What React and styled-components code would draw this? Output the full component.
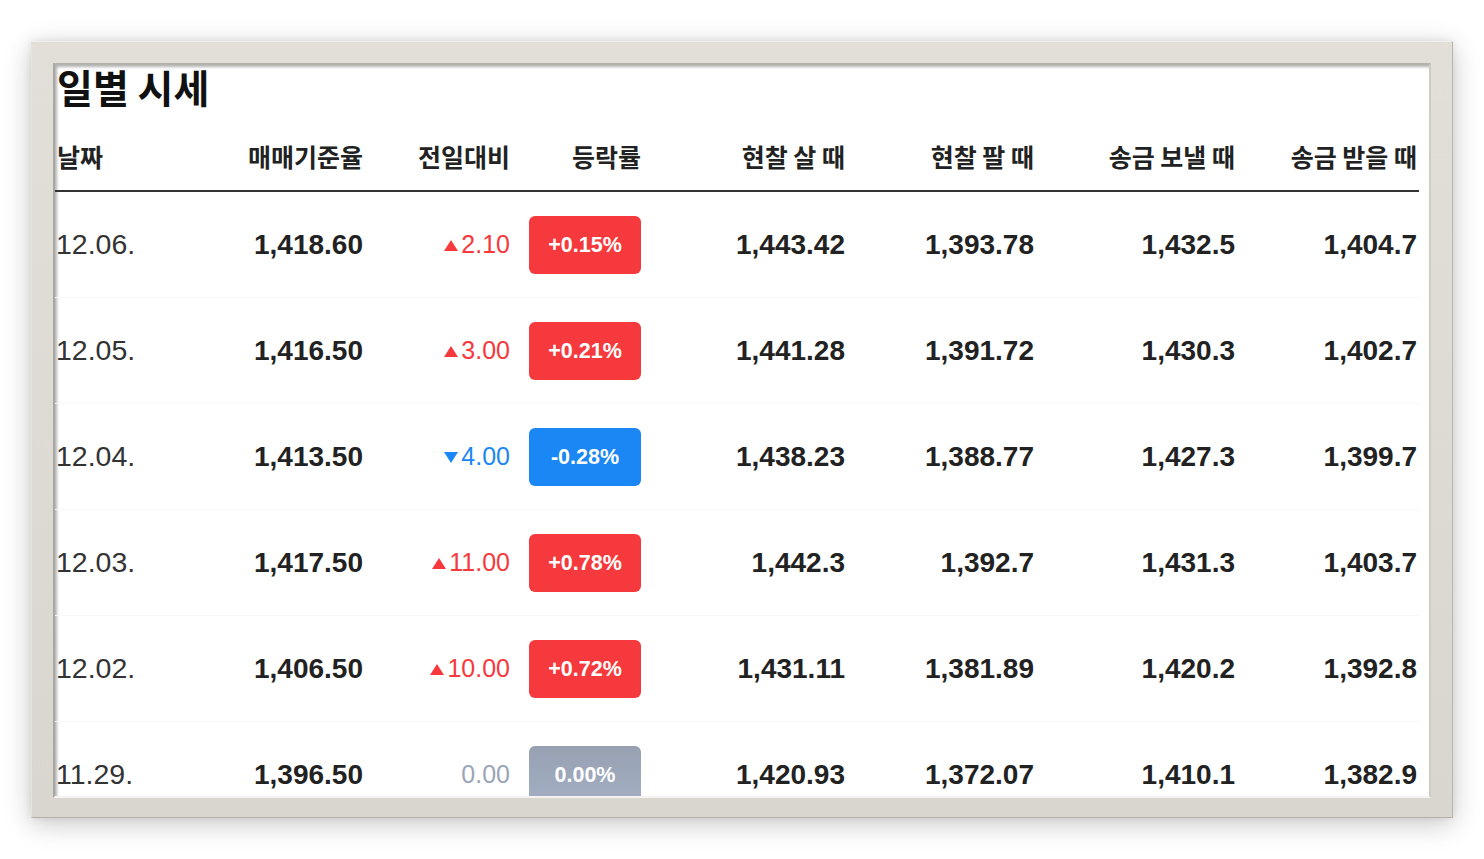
import React from 'react';
import styled, { createGlobalStyle } from 'styled-components';

const GlobalStyle = createGlobalStyle`
  html, body {
    margin: 0;
    padding: 0;
    background: #ffffff;
  }
`;

const Page = styled.div`
  padding: 41px 31px 0 31px;
  width: 1484px;
  height: 859px;
  box-sizing: border-box;
`;

const Frame = styled.div`
  width: 1422px;
  height: 777px;
  box-sizing: border-box;
  padding: 21px 21px 19px 21px;
  background: linear-gradient(180deg, #e2dfd9 0%, #d9d6cf 100%);
  border: 1px solid;
  border-color: #f2f0ec #b9b6af #b3b0a9 #e6e3dd;
  box-shadow: 0 6px 26px rgba(0, 0, 0, 0.22), 0 0 8px rgba(0, 0, 0, 0.08);
`;

const Panel = styled.div`
  height: 100%;
  box-sizing: border-box;
  display: flex;
  flex-direction: column;
  background: #ffffff;
  border: 2px solid;
  border-color: #b4b2ac #cfccc6 #f4f3f0 #a9a7a1;
  box-shadow: inset 2px 2px 3px rgba(0, 0, 0, 0.3);
`;

const Title = styled.h2`
  margin: 0;
  height: 49px;
  flex-shrink: 0;
  box-sizing: border-box;
  padding: 1px 0 0 2px;
  line-height: 40px;
  font-family: 'Noto Sans CJK KR', sans-serif;
  font-size: 39px;
  font-weight: 700;
  color: #111;
  white-space: nowrap;
`;

const Table = styled.div`
  flex: 1;
  min-height: 0;
  overflow: hidden;
`;

const cols = '175px 133px 147px 131px 204px 189px 201px 182px';

const HeadRow = styled.div`
  display: grid;
  grid-template-columns: ${cols};
  width: 1364px;
  height: 78px;
  box-sizing: border-box;
  padding-bottom: 20px;
  align-items: end;
  border-bottom: 2px solid #333;
`;

const HeadCell = styled.div`
  font-family: 'Noto Sans CJK KR', sans-serif;
  font-size: 25px;
  font-weight: 700;
  line-height: 28px;
  color: #222;
  text-align: ${(p) => (p.$left ? 'left' : 'right')};
  padding-left: ${(p) => (p.$left ? '2px' : '0')};
  white-space: nowrap;
`;

const Row = styled.div`
  display: grid;
  grid-template-columns: ${cols};
  width: 1364px;
  height: 106px;
  box-sizing: border-box;
  align-items: center;
  border-bottom: 1px solid #f8f8f8;
`;

const DateCell = styled.div`
  font-family: 'Liberation Sans', Arial, sans-serif;
  font-size: 28.5px;
  color: #333;
  padding-left: 1px;
`;

const Num = styled.div`
  font-family: 'Liberation Sans', Arial, sans-serif;
  font-size: 28px;
  font-weight: 700;
  color: #222;
  text-align: right;
`;

const colors = {
  up: '#f5393c',
  down: '#1b87f5',
  flat: '#9aa5b6',
};

const Change = styled.div`
  display: flex;
  justify-content: flex-end;
  align-items: center;
  gap: 3px;
  font-family: 'Liberation Sans', Arial, sans-serif;
  font-size: 25px;
  color: ${(p) => colors[p.$dir]};
`;

const Arrow = styled.span`
  width: 0;
  height: 0;
  margin-top: 2px;
  border-left: 7px solid transparent;
  border-right: 7px solid transparent;
  ${(p) =>
    p.$dir === 'up'
      ? `border-bottom: 11px solid ${colors.up};`
      : `border-top: 11px solid ${colors.down};`}
`;

const BadgeCell = styled.div`
  display: flex;
  justify-content: flex-end;
`;

const Badge = styled.div`
  width: 112px;
  height: 58px;
  border-radius: 6px;
  display: flex;
  align-items: center;
  justify-content: center;
  padding-top: 2px;
  box-sizing: border-box;
  font-family: 'Liberation Sans', Arial, sans-serif;
  font-size: 21.5px;
  font-weight: 700;
  color: #fff;
  background: ${(p) =>
    p.$dir === 'flat'
      ? 'linear-gradient(180deg, #97a1b2 0%, #a3aec3 100%)'
      : colors[p.$dir]};
`;

const rows = [
  { date: '12.06.', base: '1,418.60', dir: 'up', diff: '2.10', rate: '+0.15%', buy: '1,443.42', sell: '1,393.78', send: '1,432.5', recv: '1,404.7' },
  { date: '12.05.', base: '1,416.50', dir: 'up', diff: '3.00', rate: '+0.21%', buy: '1,441.28', sell: '1,391.72', send: '1,430.3', recv: '1,402.7' },
  { date: '12.04.', base: '1,413.50', dir: 'down', diff: '4.00', rate: '-0.28%', buy: '1,438.23', sell: '1,388.77', send: '1,427.3', recv: '1,399.7' },
  { date: '12.03.', base: '1,417.50', dir: 'up', diff: '11.00', rate: '+0.78%', buy: '1,442.3', sell: '1,392.7', send: '1,431.3', recv: '1,403.7' },
  { date: '12.02.', base: '1,406.50', dir: 'up', diff: '10.00', rate: '+0.72%', buy: '1,431.11', sell: '1,381.89', send: '1,420.2', recv: '1,392.8' },
  { date: '11.29.', base: '1,396.50', dir: 'flat', diff: '0.00', rate: '0.00%', buy: '1,420.93', sell: '1,372.07', send: '1,410.1', recv: '1,382.9' },
];

const heads = ['매매기준율', '전일대비', '등락률', '현찰 살 때', '현찰 팔 때', '송금 보낼 때', '송금 받을 때'];

export default function App() {
  return (
    <Page>
      <GlobalStyle />
      <Frame>
        <Panel>
          <Title>일별 시세</Title>
          <Table>
            <HeadRow>
              <HeadCell $left>날짜</HeadCell>
              {heads.map((h) => (
                <HeadCell key={h}>{h}</HeadCell>
              ))}
            </HeadRow>
            {rows.map((r) => (
              <Row key={r.date}>
                <DateCell>{r.date}</DateCell>
                <Num>{r.base}</Num>
                <Change $dir={r.dir}>
                  {r.dir !== 'flat' && <Arrow $dir={r.dir} />}
                  {r.diff}
                </Change>
                <BadgeCell>
                  <Badge $dir={r.dir}>{r.rate}</Badge>
                </BadgeCell>
                <Num>{r.buy}</Num>
                <Num>{r.sell}</Num>
                <Num>{r.send}</Num>
                <Num>{r.recv}</Num>
              </Row>
            ))}
          </Table>
        </Panel>
      </Frame>
    </Page>
  );
}
